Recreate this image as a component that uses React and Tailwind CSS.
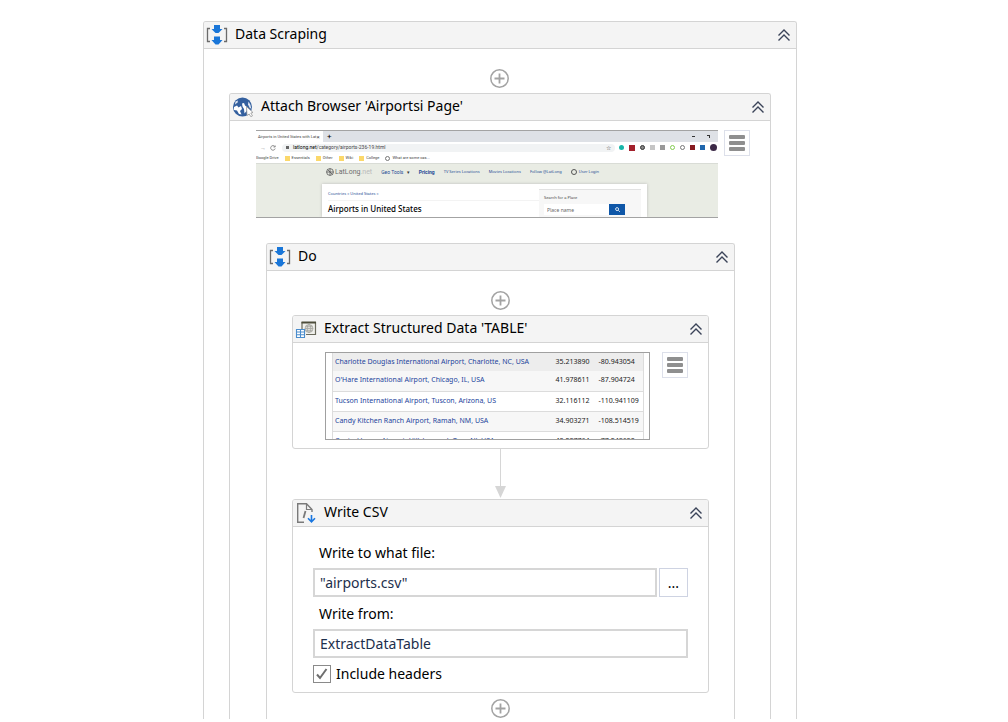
import { useState } from "react";

const airports = [
  ["Charlotte Douglas International Airport, Charlotte, NC, USA", "35.213890", "-80.943054"],
  ["O'Hare International Airport, Chicago, IL, USA", "41.978611", "-87.904724"],
  ["Tucson International Airport, Tuscon, Arizona, US", "32.116112", "-110.941109"],
  ["Candy Kitchen Ranch Airport, Ramah, NM, USA", "34.903271", "-108.514519"],
  ["Central Jersey Airport, Hillsborough Twp, NJ, USA", "40.207764", "-77.248650"],
];

const bookmarks = ["Essentials", "Other", "Wiki", "College"];

function SequenceIcon() {
  return (
    <svg viewBox="0 0 22 20" className="h-5 w-[22px]" aria-hidden="true">
      <path d="M4 3.5H1.5V16.5H4M18 3.5H20.5V16.5H18" fill="none" stroke="#6b6b6b" strokeWidth="1.3" />
      <path d="M8 0H14V4H16.5L12.5 8H9.5L5.5 4H8Z" fill="#1976d8" />
      <path d="M8 11.5H14V15H16.5L12.5 19.5H9.5L5.5 15H8Z" fill="#1976d8" />
    </svg>
  );
}

function BrowserIcon() {
  return (
    <svg viewBox="0 0 22 20" className="h-5 w-[22px]" aria-hidden="true">
      <circle cx="10.500" cy="10" r="9.500" fill="#34609f" />
      <path d="M3.500 4.500L6 3.500L5.500 5.500L3 7.500Z" fill="#dfe6f2" />
      <path d="M2 10L5 8.500L6.500 10.500L9 9L10 12L8 14L9.500 17.500L7 17L5 13.500L2 13Z" fill="#fff" />
      <path d="M10 6.500L12 6L13 8.500L15 10L14.500 14L12.500 16.500L12 12L10.500 9.500Z" fill="#fff" />
      <path d="M16.500 4.500L18.500 8L19.300 12L17.500 10.500L16 7.500Z" fill="#dfe6f2" />
      <path d="M14.500 9.500L21 15.500L18.800 16L20.500 18.800L18.800 19.700L17.200 17L15 18.500Z" fill="#fff" stroke="#8b8b8b" strokeWidth="0.700" />
    </svg>
  );
}

function ExtractIcon() {
  return (
    <svg viewBox="0 0 22 20" className="h-5 w-[22px]" aria-hidden="true">
      <path d="M7 12V3.500H20.500V15.500H11" fill="#f0f0ec" stroke="#6a6a5c" strokeWidth="1.2" />
      <path d="M6.500 3.500H21" stroke="#4c4c3a" strokeWidth="2" />
      <g fill="none" stroke="#a5a5a0" strokeWidth="0.8">
        <circle cx="14" cy="9.500" r="4" fill="#deded8" />
        <ellipse cx="14" cy="9.500" rx="1.800" ry="4" />
        <path d="M10 9.500H18M10.800 7.300H17.200M10.800 11.700H17.200" />
      </g>
      <rect x="1" y="10" width="9" height="8.500" fill="#fff" />
      <path d="M1.500 10.500H9.500V18.500H1.500ZM1.500 13H9.500M1.500 15.700H9.500M5.500 10.500V18.500" fill="none" stroke="#4a8ccc" strokeWidth="1.1" />
    </svg>
  );
}

function CsvIcon() {
  return (
    <svg viewBox="0 0 22 20" className="h-5 w-[22px]" aria-hidden="true">
      <path d="M9 19.300H2.700V0.800H11.500L17 6.500V9" fill="none" stroke="#7a7a7a" strokeWidth="1.400" />
      <path d="M11.500 1V6.500H17" fill="none" stroke="#7a7a7a" strokeWidth="1.200" />
      <path d="M10.500 8L8.500 15" stroke="#7a7a7a" strokeWidth="1.800" />
      <path d="M16.500 12V18.500M13 15.300L16.500 18.800L20 15.300" fill="none" stroke="#1976e0" strokeWidth="1.600" />
    </svg>
  );
}

function AddButton() {
  return (
    <button type="button" aria-label="Add activity" className="mx-auto block size-5">
      <svg viewBox="0 0 20 20" className="size-5" fill="none" stroke="#a3a3a3">
        <circle cx="9.500" cy="9.500" r="8.700" strokeWidth="1.500" />
        <path d="M9.500 4.500V14.500M4.500 9.500H14.500" strokeWidth="1.800" />
      </svg>
    </button>
  );
}

function MenuButton() {
  return (
    <button
      type="button"
      aria-label="Options"
      className="flex size-[26px] shrink-0 flex-col items-center justify-center gap-0.5 border border-[#dde0ea] bg-white"
    >
      <span className="h-1 w-4 rounded-[1px] bg-[#8f8f8f]" />
      <span className="h-1 w-4 rounded-[1px] bg-[#8f8f8f]" />
      <span className="h-1 w-4 rounded-[1px] bg-[#8f8f8f]" />
    </button>
  );
}

function Activity({ icon, title, open, children }) {
  const [expanded, setExpanded] = useState(true);

  return (
    <section
      className={
        open
          ? "rounded-t-[3px] border border-b-0 border-[#d4d4d4] bg-white"
          : "rounded-[3px] border border-[#d4d4d4] bg-white"
      }
    >
      <header className="flex h-[27px] items-center gap-[7px] rounded-t-xs border-b border-[#d4d4d4] bg-[#f4f4f4] pr-1.5 pl-0.5">
        {icon}
        <h2 className="flex-1 pb-0.5 leading-6">{title}</h2>
        <button type="button" aria-label="Toggle" onClick={() => setExpanded(!expanded)}>
          <svg viewBox="0 0 12 12" className="size-3" fill="none" stroke="#3a4358" strokeWidth="1.400">
            <path d="M0.500 6.500L6 1L11.500 6.500M0.500 11.500L6 6L11.500 11.500" />
          </svg>
        </button>
      </header>
      {expanded && children}
    </section>
  );
}

function BrowserPreview() {
  return (
    <div className="flex h-[88px] min-w-0 flex-1 flex-col overflow-hidden border-y border-[#a3a3a3] bg-white font-['Roboto',sans-serif] text-[4px] leading-none whitespace-nowrap text-[#444]">
      <div className="flex h-[11px] shrink-0 items-center bg-[#dee1e6]">
        <div className="flex h-full w-[67px] items-center justify-between bg-white pr-1 pl-0.5">
          <span>Airports in United States with Lat</span>
          <span className="text-[6px]">×</span>
        </div>
        <span className="flex-1 pl-1 text-[8px] text-black">+</span>
        <span className="mr-3 h-px w-[3px] bg-[#333]" />
        <span className="mr-2 size-[3px] border-t border-r border-[#333]" />
      </div>

      <div className="flex h-[11px] shrink-0 items-center pl-1">
        <span className="w-2.5 text-[6px] text-[#999]">→</span>
        <svg viewBox="0 0 6 6" className="mr-1.5 size-1.5" fill="none" stroke="#777" strokeWidth="0.800">
          <path d="M4.800 1.500A2.300 2.300 0 1 0 5.200 3.500M5.200 0.500V2H3.500" />
        </svg>
        <div className="flex h-2 flex-1 items-center gap-1 rounded-full bg-[#f1f3f4] px-1 text-[5px]">
          <span className="size-[3px] bg-[#666]" />
          <span className="flex-1">
            <span className="text-black">latlong.net</span>/category/airports-236-19.html
          </span>
          <span className="text-[6px]">☆</span>
        </div>
        <div className="flex items-center gap-[5px] pr-px pl-1">
          <span className="size-[5px] rounded-full bg-[#18b5a8]" />
          <span className="size-[6px] bg-[#a3202c]" />
          <span className="size-[5px] rounded-full border border-[#333] bg-[#888]" />
          <span className="size-[5px] bg-[#c5c5c5]" />
          <span className="size-[5px] bg-[#999]" />
          <span className="size-[5px] rounded-full border border-[#83cc50]" />
          <span className="size-[5px] rounded-full border border-[#777]" />
          <span className="size-[5px] bg-[#871b20]" />
          <span className="size-[5px] bg-[#1f66ad]" />
          <span className="size-[7px] rounded-full bg-[#3c2947]" />
        </div>
      </div>

      <div className="flex h-2.5 shrink-0 items-center gap-1.5">
        <span>Google Drive</span>
        {bookmarks.map((name) => (
          <span key={name} className="flex items-center gap-0.5">
            <span className="h-[5px] w-[5px] bg-[#fbd86b]" />
            {name}
          </span>
        ))}
        <span className="flex items-center gap-0.5">
          <span className="size-[5px] rounded-full border border-[#777]" />
          What are some cas...
        </span>
      </div>

      <div className="flex flex-1 flex-col border-t border-[#d9dcd6] bg-[#e9ece4] font-['Noto_Sans',sans-serif]">
        <nav className="flex h-5 shrink-0 items-center gap-[9px] pb-1 pl-[70px] text-[#1d4a94]">
          <span className="flex items-center gap-px text-[7px] text-[#6e6e6e]">
            <svg viewBox="0 0 8 8" className="size-2" fill="none" stroke="#555" strokeWidth="0.800">
              <circle cx="4" cy="4" r="3.400" />
              <path d="M4 0.600V7.400M0.600 4H7.400M1.600 1.600L6.400 6.400" />
            </svg>
            <span className="font-['Roboto',sans-serif]">
              LatLong<span className="text-[#bbb]">.net</span>
            </span>
          </span>
          <a href="#tools" className="font-['Roboto',sans-serif] text-[5px]">
            Geo Tools <span className="pl-0.5 text-[#333]">▾</span>
          </a>
          <a href="#pricing" className="font-['Roboto',sans-serif] text-[5px] font-bold">Pricing</a>
          <a href="#tv">TV Series Locations</a>
          <a href="#movies">Movies Locations</a>
          <a href="#follow">Follow @LatLong</a>
          <a href="#login" className="flex items-center gap-0.5">
            <span className="size-1.5 rounded-full border border-[#555]" />
            User Login
          </a>
        </nav>

        <div className="mr-[71px] ml-[66px] flex flex-1 justify-between bg-white pl-1.5 shadow-[0_0_3px_#bbb]">
          <div className="flex-1 pt-2">
            <p className="border-b border-[#f3f3f3] pb-1 text-[#1d4a94]">Countries » United States »</p>
            <h3 className="pt-1 text-[8px] leading-2 font-medium text-black">Airports in United States</h3>
          </div>
          <div className="mt-[5px] mr-1.5 w-[102px] border-t border-[#e2e2e2] bg-[#f7f7f7] px-[5px] pt-1.5">
            <label htmlFor="place" className="block pb-1">Search for a Place</label>
            <div className="flex h-[11px]">
              <input id="place" placeholder="Place name" className="h-[11px] w-[65px] bg-white px-[3px] text-[5px] placeholder:text-[#666]" />
              <button type="button" aria-label="Search" className="flex w-4 items-center justify-center bg-[#0f57a8]">
                <svg viewBox="0 0 6 6" className="size-[5px]" fill="none" stroke="#fff">
                  <circle cx="2.500" cy="2.500" r="1.800" />
                  <path d="M4 4L5.800 5.800" />
                </svg>
              </button>
            </div>
          </div>
        </div>
      </div>
    </div>
  );
}

function TablePreview() {
  return (
    <div className="h-[88px] flex-1 overflow-hidden border border-[#a0a0a0] bg-white pr-[5px] pl-1.5">
      <table className="w-full table-fixed border-x border-[#dcdcdc] text-[7px] leading-none whitespace-nowrap">
        <tbody>
          {airports.map(([name, lat, lng], i) => (
            <tr
              key={name}
              className={
                i === 0
                  ? "h-[18px] bg-[#ededed]"
                  : "h-5 border-b border-[#dcdcdc] odd:bg-white even:bg-[#f7f7f7]"
              }
            >
              <td className="pb-0.5 pl-0.5">
                <a href="#airport" className="text-[#1c449c]">{name}</a>
              </td>
              <td className="w-[43px] pb-0.5 text-[#222]">{lat}</td>
              <td className="w-[45px] pb-0.5 text-[#222]">{lng}</td>
            </tr>
          ))}
        </tbody>
      </table>
    </div>
  );
}

function Connector() {
  return (
    <div className="flex h-[50px] flex-col items-center">
      <span className="w-px flex-1 bg-[#d6d6d6]" />
      <svg viewBox="0 0 11 12" className="mb-px h-3 w-[11px]" aria-hidden="true">
        <path d="M0 0H11L5.500 12Z" fill="#d6d6d6" />
      </svg>
    </div>
  );
}

function WriteCsvForm() {
  const [file, setFile] = useState('"airports.csv"');
  const [source, setSource] = useState("ExtractDataTable");
  const [headers, setHeaders] = useState(true);

  return (
    <form className="pt-3.5 pr-5 pb-[9px] pl-5">
      <label htmlFor="file" className="mb-[3px] block pl-1.5 leading-6">Write to what file:</label>
      <div className="flex gap-0.5">
        <input
          id="file"
          value={file}
          onChange={(e) => setFile(e.target.value)}
          className="h-[29px] min-w-0 flex-1 border-2 border-[#d6d6d6] bg-white px-[5px] text-[#1d2f4c]"
        />
        <button type="button" aria-label="Browse" className="h-[29px] w-[29px] border border-[#ced3e2] bg-white">
          ...
        </button>
      </div>
      <label htmlFor="source" className="mt-[5px] mb-[3px] block pl-1.5 leading-6">Write from:</label>
      <input
        id="source"
        value={source}
        onChange={(e) => setSource(e.target.value)}
        className="h-[29px] w-full border-2 border-[#d6d6d6] bg-white px-[5px] text-[#1d2f4c]"
      />
      <label className="mt-[7px] flex h-[18px] items-center gap-[5px]">
        <span className="grid size-[18px]">
          <input
            type="checkbox"
            checked={headers}
            onChange={(e) => setHeaders(e.target.checked)}
            className="peer col-start-1 row-start-1 size-[18px] appearance-none border border-[#8a8a8a] bg-white"
          />
          <svg
            viewBox="0 0 18 18"
            className="pointer-events-none invisible col-start-1 row-start-1 size-[18px] peer-checked:visible"
            fill="none"
            stroke="#6e6e6e"
            strokeWidth="2"
          >
            <path d="M4 9.500L7 13L13.500 4" />
          </svg>
        </span>
        Include headers
      </label>
    </form>
  );
}

export default function App() {
  return (
    <main className="bg-white pt-[21px] pr-2 pb-[3px] font-['Noto_Sans','Open_Sans',sans-serif] text-sm text-black">
      <div className="mx-auto max-w-[594px]">
        <Activity icon={<SequenceIcon />} title="Data Scraping" open>
          <div className="px-[25px] pt-5">
            <AddButton />
            <div className="mt-1">
              <Activity icon={<BrowserIcon />} title="Attach Browser 'Airportsi Page'" open>
                <div className="flex gap-1.5 pt-[9px] pr-5 pl-[26px]">
                  <BrowserPreview />
                  <MenuButton />
                </div>
                <div className="pt-[25px] pr-[35px] pl-9">
                  <Activity icon={<SequenceIcon />} title="Do" open>
                    <div className="px-[25px] pt-5">
                      <AddButton />
                      <div className="mt-1">
                        <Activity icon={<ExtractIcon />} title="Extract Structured Data 'TABLE'">
                          <div className="flex gap-3 pt-[9px] pr-5 pb-2 pl-8">
                            <TablePreview />
                            <MenuButton />
                          </div>
                        </Activity>
                      </div>
                      <Connector />
                      <Activity icon={<CsvIcon />} title="Write CSV">
                        <WriteCsvForm />
                      </Activity>
                      <div className="pt-1.5">
                        <AddButton />
                      </div>
                    </div>
                  </Activity>
                </div>
              </Activity>
            </div>
          </div>
        </Activity>
      </div>
    </main>
  );
}
